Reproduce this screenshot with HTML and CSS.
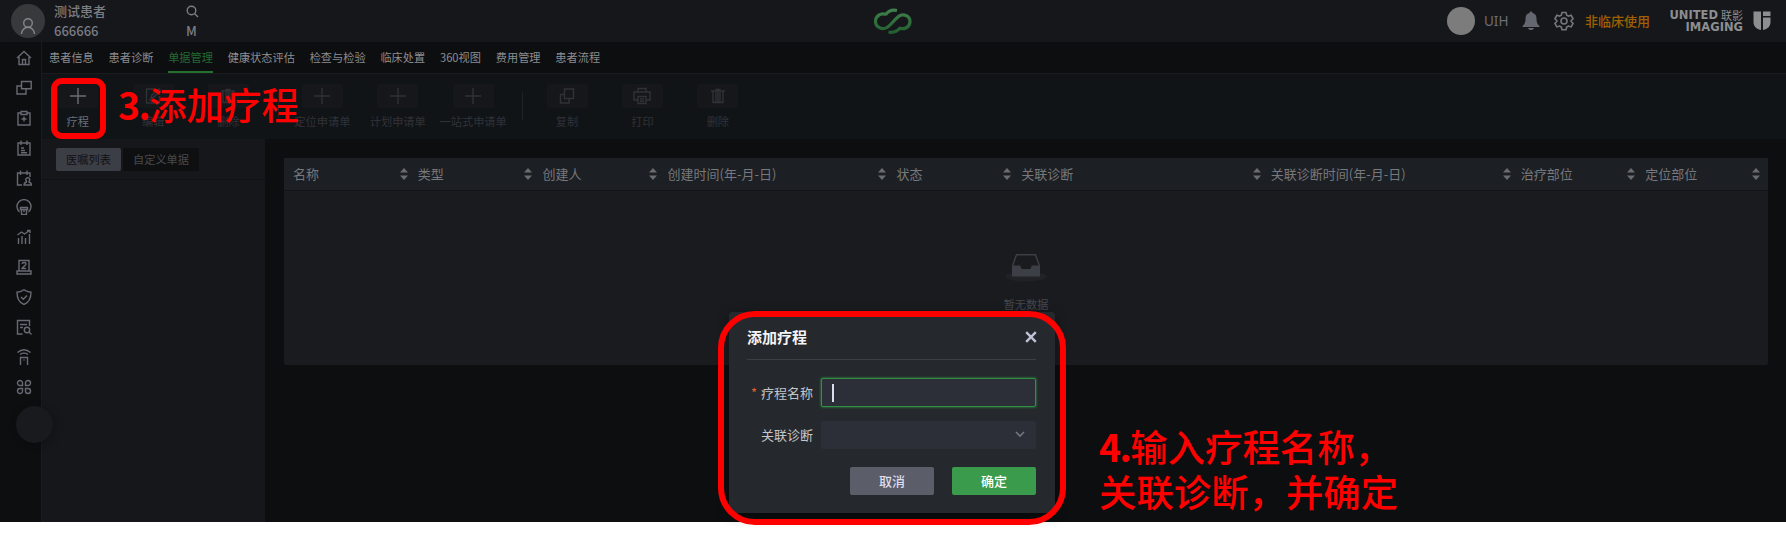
FILE: index.html
```
<!DOCTYPE html>
<html lang="zh-CN">
<head>
<meta charset="utf-8">
<title>单据管理</title>
<link rel="stylesheet" href="styles.css">
</head>
<body>
<svg class="defs" width="0" height="0">
  <symbol id="plus" viewBox="0 0 18 18"><path d="M9 1v16M1 9h16"/></symbol>
  <symbol id="trash" viewBox="0 0 18 18"><path d="M2 4h14M6.500 2.500h5M4 4v11.500h10V4M7 5v10M9 5v10M11 5v10"/></symbol>
  <symbol id="sort" viewBox="0 0 8 14"><path d="M4 1l4 4.500h-8zM4 13l4-4.500h-8z"/></symbol>
</svg>
<div class="app">
  <header class="header">
    <div class="avatar"><svg class="line" width="16" height="18" viewBox="0 0 16 18"><circle cx="8" cy="6" r="4.300"/><path d="M1.500 17c0-4 3-6.700 6.500-6.700s6.500 2.700 6.500 6.700"/></svg></div>
    <div class="patient">
      <span>测试患者</span>
      <svg class="line" width="13" height="13" viewBox="0 0 13 13"><circle cx="5.500" cy="5.500" r="4.300"/><path d="M8.700 8.700l3.300 3.300"/></svg>
      <span>666666</span>
      <span>M</span>
    </div>
    <svg class="brand" width="40" height="26" viewBox="0 0 40 26"><defs><linearGradient id="g" x1="0" y1="0" x2="0" y2="1"><stop offset="0" stop-color="#40804c"/><stop offset="1" stop-color="#226030"/></linearGradient></defs>
      <path d="M13 6.500C8 4.500 2.500 8 2.500 13.500S9 22.500 14 19.500C18 17 21 12 25.500 8.500 30 5 37 7.500 37 13.500S31 22 26 20M12.500 7C15 3 19 1.500 24 2.500M27 20C24 23.500 20.500 25 15.500 24" fill="none" stroke="url(#g)" stroke-width="3.200"/></svg>
    <div class="user">
      <span class="photo"></span>
      <span class="uname">UIH</span>
      <svg class="bell" width="18" height="20" viewBox="0 0 18 20"><path d="M9 0.500c1 0 1.500.6 1.500 1.600 3 .8 4 3 4 5.500 0 3.500.5 5.400 3 7.400v1H.5v-1c2.500-2 3-3.900 3-7.400 0-2.500 1-4.700 4-5.500 0-1 .5-1.600 1.500-1.600zM6 17h6c-.4 1.400-1.600 2-3 2s-2.600-.6-3-2z"/></svg>
      <svg class="line gear" width="20" height="20" viewBox="0 0 20 20"><circle cx="10" cy="10" r="3"/><path d="M8 1.500h4l.7 2.600 1.800 1 2.600-.8 2 3.500-1.900 1.700v1l1.900 1.900-2 3.500-2.600-.8-1.800 1-.7 2.600H8l-.7-2.600-1.800-1-2.600.8-2-3.500 1.900-1.900v-1L.9 7.800l2-3.500 2.600.8 1.800-1z"/></svg>
      <span class="warn">非临床使用</span>
      <div class="company"><div><b>UNITED</b><span>联影</span></div><div><b>IMAGING</b></div></div>
      <svg class="shield" width="18" height="20" viewBox="0 0 18 20"><path d="M.5.500H8v18.500C3 18 .5 15 .5 11zM10 .5h7.500V5H10zM10 6.500h7.500V11c0 4-2.500 7-7.500 8z"/></svg>
    </div>
  </header>
  <div class="body">
    <nav class="side">
      <svg viewBox="0 0 16 16"><path d="M1 8l7-6.500L15 8M3 7v7.500h10V7M6.500 14V9.500h3V14"/></svg>
      <svg viewBox="0 0 16 16"><path d="M5.500 1.500h9.700v7.300H5.500zM5.500 6H1v8h9V9"/></svg>
      <svg viewBox="0 0 16 16"><path d="M5 3H2v12h12V3h-3M5 1.500h6v3H5zM8 6.500v5M5.500 9h5"/></svg>
      <svg viewBox="0 0 16 16"><path d="M2 3h12v12H2zM5 .5V5M11 .5V5M5 8h3M5 10.500h4M5 12.700h6"/></svg>
      <svg viewBox="0 0 16 16"><path d="M6 15H1.500V3H14v4M4.500 .5V5M11 .5V5M8 15h7.500c0-2-1-2.500-2.500-3v-.7a2 2 0 1 0-2.500 0v.7c-1.500.5-2.500 1-2.500 3z"/></svg>
      <svg viewBox="0 0 16 16"><path d="M3.500 13A7 7 0 1 1 12.500 13M4.500 8.500h7v2h-7zM5.500 11v4.500h5V11M8 11v2"/></svg>
      <svg viewBox="0 0 16 16"><path d="M2.500 15V9M6 15V7M9.500 15V9M13.500 15V5M1.500 6l4-3 3 2 5-3.500M11 1.500h3V4"/></svg>
      <svg viewBox="0 0 16 16"><path d="M3 11.500V1.500h10v10M1 12h14v3H1zM6 5c.3-2 4-2 4 0 0 1.500-3 2.500-4 4.500h4"/></svg>
      <svg viewBox="0 0 16 16"><path d="M8 .7c2 1.700 4 2.300 7 2.500 0 5-1 9.800-7 12.300C2 13 1 8.200 1 3.200c3-.2 5-.8 7-2.500zM5 8l2.300 2.300L11 6.500"/></svg>
      <svg viewBox="0 0 16 16"><path d="M6.500 15h-5V1.500h12V7M4 5.500h7M4 8.500h3M13 13l2.500 2.500"/><circle cx="11" cy="11" r="2.700"/></svg>
      <svg viewBox="0 0 16 16"><path d="M1.500 3.500c4-3.300 9-3.300 13 0M4 5.500c2.500-1.700 5.500-1.700 8 0M4.500 16V8.500h7V16M7.500 11h1"/></svg>
      <svg viewBox="0 0 16 16"><path d="M6.500 6.500H4A2.500 2.500 0 1 1 6.500 4zM9.500 6.500V4A2.500 2.500 0 1 1 12 6.500zM6.500 9.500V12A2.500 2.500 0 1 1 4 9.500zM9.500 9.500H12A2.500 2.500 0 1 1 9.500 12z"/></svg>
      <i class="float"></i>
    </nav>
    <main class="main">
      <div class="tabs">
        <span>患者信息</span><span>患者诊断</span><span class="on">单据管理</span><span>健康状态评估</span><span>检查与检验</span><span>临床处置</span><span>360视图</span><span>费用管理</span><span>患者流程</span>
      </div>
      <div class="tools">
        <div class="tool live"><i><svg><use href="#plus"/></svg></i><span>疗程</span></div>
        <div class="tool"><i><svg viewBox="0 0 18 18"><path d="M10 2H2.500v14h13V9M7 11l1-3 7-6 1.500 1.500-7 7zM5 13h4"/></svg></i><span>编辑</span></div>
        <div class="tool"><i><svg><use href="#trash"/></svg></i><span>删除</span></div>
        <b class="sep"></b>
        <div class="tool"><i><svg><use href="#plus"/></svg></i><span>定位申请单</span></div>
        <div class="tool"><i><svg><use href="#plus"/></svg></i><span>计划申请单</span></div>
        <div class="tool"><i><svg><use href="#plus"/></svg></i><span>一站式申请单</span></div>
        <b class="sep"></b>
        <div class="tool"><i><svg viewBox="0 0 18 18"><path d="M6.500 2h9v9.500h-9zM6.500 7.500H2.500v8.500h8.500v-4"/></svg></i><span>复制</span></div>
        <div class="tool"><i><svg viewBox="0 0 18 18"><path d="M5 5V1.500h8V5M4.500 13H1V5h16v8h-3.500M5 9.500h8v7H5zM7 12h4M7 14.200h4"/></svg></i><span>打印</span></div>
        <div class="tool"><i><svg><use href="#trash"/></svg></i><span>删除</span></div>
      </div>
      <div class="work">
        <aside class="panel"><div class="switch"><span class="on">医嘱列表</span><span>自定义单据</span></div></aside>
        <section class="table">
          <div class="thead">
            <span>名称<svg><use href="#sort"/></svg></span>
            <span>类型<svg><use href="#sort"/></svg></span>
            <span>创建人<svg><use href="#sort"/></svg></span>
            <span>创建时间(年-月-日)<svg><use href="#sort"/></svg></span>
            <span>状态<svg><use href="#sort"/></svg></span>
            <span>关联诊断<svg><use href="#sort"/></svg></span>
            <span>关联诊断时间(年-月-日)<svg><use href="#sort"/></svg></span>
            <span>治疗部位<svg><use href="#sort"/></svg></span>
            <span>定位部位<svg><use href="#sort"/></svg></span>
          </div>
          <div class="empty">
            <svg width="42" height="29" viewBox="0 0 42 29"><ellipse cx="21" cy="23.500" rx="20.500" ry="5" fill="#202226"/><path d="M7.500 13L11.500 1.700h19L34.500 13" fill="none" stroke="#3d3f46" stroke-width="1.400"/><path d="M7 12.500h8.500c0 2 .8 3.500 2 3.500h7c1.200 0 2-1.500 2-3.500H35V23.500H7z" fill="#3d3f46"/></svg>
            <span>暂无数据</span>
          </div>
        </section>
      </div>
    </main>
  </div>
  <div class="dialog">
    <div class="title"><span>添加疗程</span><svg width="12" height="12" viewBox="0 0 12 12"><path d="M1.200 1.200l9.600 9.600M10.800 1.200L1.200 10.800"/></svg></div>
    <div class="row"><label><em>*</em>疗程名称</label><div class="field focus"><i class="caret"></i></div></div>
    <div class="row"><label>关联诊断</label><div class="field"><svg class="chev" width="10" height="7" viewBox="0 0 10 7"><path d="M1 1l4 4 4-4"/></svg></div></div>
    <div class="actions"><span class="btn">取消</span><span class="btn ok">确定</span></div>
  </div>
</div>
<div class="mark mark-tool"></div>
<div class="mark mark-dialog"></div>
<div class="note note-a"><b>3.</b>添加疗程</div>
<div class="note note-b"><b>4.</b>输入疗程名称，<br>关联诊断，并确定</div>
</body>
</html>
```
FILE: styles.css
```
* { box-sizing: border-box; }
body { margin: 0; height: 536px; background: #fff; overflow: hidden; position: relative; font-family: "Noto Sans CJK SC", sans-serif; }
i, em { font-style: normal; }
svg { display: block; flex: none; }
.defs { position: absolute; }
.line, .side svg, .tool svg { fill: none; stroke: currentColor; stroke-width: 1.4; }
.app { height: 522px; background: #0d0e10; display: flex; flex-direction: column; position: relative; }

.header { height: 42px; flex: none; background: #15171b; color: #7c7d83; display: grid; grid-template-columns: 43px 819px 40px 1fr; align-items: center; padding: 0 15px 0 11px; }
.avatar { width: 34px; height: 34px; border-radius: 50%; background: #38393b; color: #85868a; display: flex; justify-content: center; padding-top: 13px; margin-top: -1px; }
.patient { display: grid; grid-template-columns: 132px 20px; grid-template-rows: 20px 20px; align-items: center; font-size: 13px; font-weight: 500; line-height: 20px; margin-top: -1px; }
.patient svg { margin-top: 2px; }
.brand { margin-top: -1px; }
.user { justify-self: end; display: flex; align-items: center; height: 40px; margin-bottom: 1px; }
.photo { width: 28px; height: 28px; border-radius: 50%; background: #7c7c7c; }
.uname { font: 13.5px/20px "Noto Sans", sans-serif; margin-left: 9px; width: 24px; color: #6e6f75; }
.bell { fill: #64676f; margin-left: 14px; }
.gear { margin-left: 14px; color: #74757d; stroke-width: 1.6; }
.warn { font-size: 13px; font-weight: 500; color: #a06000; margin-left: 11px; width: 65px; white-space: nowrap; }
.company { width: 80px; margin-left: 13px; font: 11.5px/12px "DejaVu Sans", sans-serif; color: #8d8e90; }
.company div { display: flex; justify-content: flex-end; align-items: center; gap: 3px; height: 12px; white-space: nowrap; }
.company span { font: 11px/12px "Noto Sans CJK SC", sans-serif; }
.shield { fill: #8d8e90; margin-left: 10px; }

.body { flex: 1; display: flex; min-height: 0; }
.side { width: 42px; border-right: 1px solid #1a1b1e; color: #676a73; padding: 8px 0 0 16px; display: flex; flex-direction: column; gap: 13.9px; position: relative; }
.side svg { width: 16px; height: 16px; }
.float { position: absolute; left: 16px; top: 364px; width: 37px; height: 37px; border-radius: 50%; background: #191a1e; box-shadow: 2px 2px 8px rgba(0,0,0,.25); }
.main { flex: 1; display: flex; flex-direction: column; }
.tabs { height: 32px; display: flex; gap: 14.8px; padding-left: 7px; border-bottom: 1px solid #191b1d; font-size: 11.2px; line-height: 31px; color: #8c8d90; }
.tabs span { height: 31px; }
.tabs .on { color: #236a32; border-bottom: 2px solid #23702f; }
.tools { height: 65px; background: #101417; display: flex; padding-top: 10px; color: #303238; }
.tool { width: 75.4px; display: flex; flex-direction: column; align-items: center; font-size: 11.2px; line-height: 16px; white-space: nowrap; }
.tool:first-child { margin-left: -2px; }
.tool i { width: 41px; height: 24px; background: #15171b; border-radius: 2px; display: flex; align-items: center; justify-content: center; margin-bottom: 5px; }
.tool svg { width: 18px; height: 18px; }
.live { color: #6c6e75; }
.sep { width: 1px; height: 28px; background: #1e2125; margin: 8px 6px 0 11.5px; }
.work { flex: 1; display: flex; align-items: flex-start; background: #0d0e10; }
.panel { width: 223px; align-self: stretch; background: #15171a; }
.switch { height: 41px; display: flex; gap: 2px; padding: 9px 0 0 14px; border-bottom: 1px solid #101214; font-size: 11.2px; line-height: 23px; text-align: center; color: #47494e; }
.switch span { width: 76px; height: 23px; background: #0e0f11; border-radius: 2px; }
.switch .on { width: 65px; background: #3c3e46; color: #101114; }
.table { margin: 19px 0 0 19px; width: 1484px; height: 207px; background: #1a1b1f; border-radius: 2px; }
.thead { height: 33px; background: #1c1f24; border-bottom: 1px solid #111316; display: grid; grid-template-columns: 124.7px 124.8px 125px 229px 124.8px 249.5px 250px 124.5px 131.7px; color: #77787b; font-size: 13px; line-height: 32px; }
.thead span { display: flex; justify-content: space-between; align-items: center; padding: 0 1px 0 9px; white-space: nowrap; }
.thead span:last-child { padding-right: 8px; }
.thead svg { width: 8px; height: 14px; fill: #6b6c6e; }
.empty { display: flex; flex-direction: column; align-items: center; padding-top: 62px; font-size: 11.2px; line-height: 16px; color: #45474d; }
.empty span { margin-top: 14px; }

.dialog { position: absolute; left: 729px; top: 312px; width: 326px; height: 201px; background: #25282d; border-radius: 3px; box-shadow: 0 3px 12px rgba(0,0,0,.4); padding: 0 19px 0 18px; color: #c4c5c8; font-size: 13px; }
.title { height: 48px; padding-top: 2px; border-bottom: 1px solid #3c3f44; display: flex; justify-content: space-between; align-items: center; font-size: 15px; font-weight: 700; color: #f4f4f6; margin-bottom: 18px; }
.title svg { fill: none; stroke: #c0c2d5; stroke-width: 2.4; margin-right: -1px; }
.row { display: flex; align-items: center; justify-content: space-between; margin-bottom: 13px; height: 29px; }
.row label { width: 66px; text-align: right; line-height: 29px; white-space: nowrap; }
.row em { color: #e0602c; margin-right: 4px; font-size: 13px; }
.field { width: 215px; height: 28px; background: #2c2f37; border-radius: 2px; display: flex; align-items: center; padding: 0 11px; }
.focus { height: 29px; border: 1px solid #319043; box-shadow: 0 0 2px 1px rgba(49,144,67,.5); padding: 0 10px; }
.caret { width: 2px; height: 18px; background: #dcdcf0; }
.chev { margin-left: auto; fill: none; stroke: #74767f; stroke-width: 1.6; }
.actions { display: flex; justify-content: flex-end; gap: 18px; margin-top: 18px; }
.btn { width: 84px; height: 28px; line-height: 28px; border-radius: 2px; background: #5b5d69; text-align: center; color: #dedeee; font-weight: 500; }
.ok { background: #3a9b4d; color: #fff; }

.mark { position: absolute; border: 6px solid #f00; }
.mark-tool { left: 51px; top: 78px; width: 55px; height: 61px; border-radius: 11px; }
.mark-dialog { left: 718px; top: 311px; width: 348px; height: 214px; border-radius: 37px; }
.note { position: absolute; color: #f00; font-size: 37.4px; line-height: 44.5px; font-weight: 500; white-space: nowrap; }
.note b { font-weight: 700; letter-spacing: -1.5px; }
.note-a { left: 118px; top: 82px; }
.note-b { left: 1099px; top: 424px; }
```
